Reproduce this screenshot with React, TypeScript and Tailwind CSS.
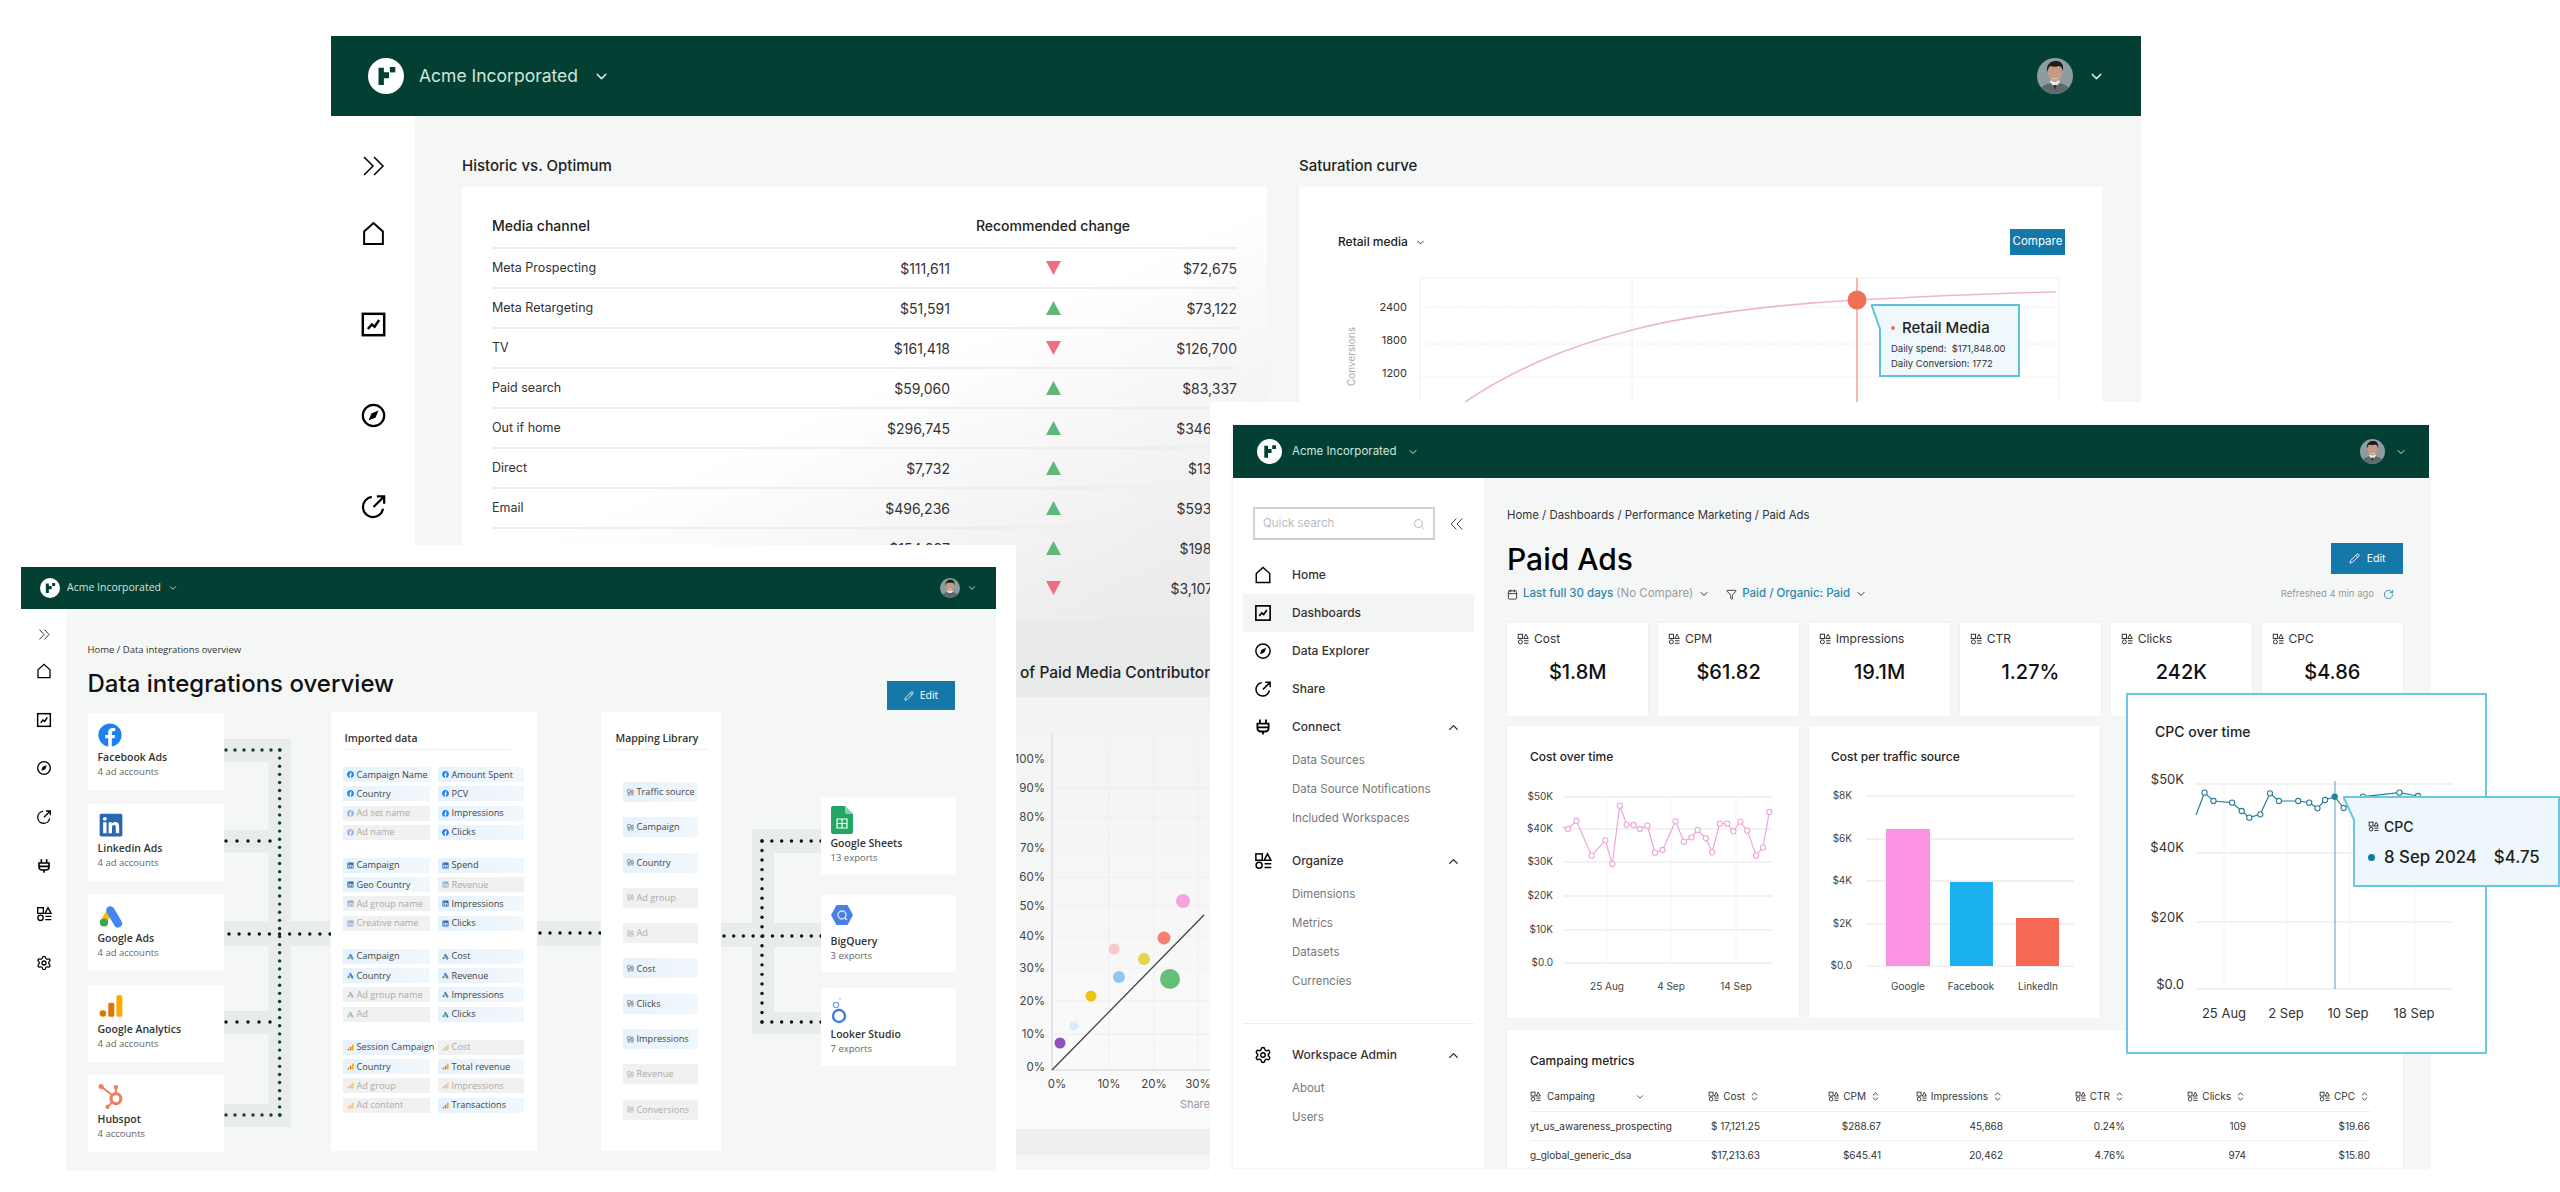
import { Calendar, ChevronDown, ChevronUp, ChevronsUpDown, Filter, Pencil, RotateCw, Search, Settings } from "lucide-react";
import { FaFacebook, FaLinkedin } from "react-icons/fa";
import { SiHubspot } from "react-icons/si";

type IconProps = { size?: number; className?: string };

const HomeIcon = ({ size = 18, className }: IconProps) => (
  <svg width={size} height={size} viewBox="0 0 24 24" fill="none" stroke="currentColor" strokeWidth="1.9" className={className}>
    <path d="M3 22V10L12 2l9 8v12z" />
  </svg>
);

const DashIcon = ({ size = 18, className }: IconProps) => (
  <svg width={size} height={size} viewBox="0 0 24 24" fill="none" stroke="currentColor" className={className}>
    <rect x="2.5" y="2.5" width="19" height="19" strokeWidth="2.2" />
    <path d="M7 16l3.5-4 2.5 2 4-6" strokeWidth="2.2" />
  </svg>
);

const CompassIcon = ({ size = 18, className }: IconProps) => (
  <svg width={size} height={size} viewBox="0 0 24 24" fill="none" stroke="currentColor" strokeWidth="2" className={className}>
    <circle cx="12" cy="12" r="9.5" />
    <path d="M15.5 8.5l-2 5-5 2 2-5z" fill="currentColor" strokeWidth="1" />
  </svg>
);

const ShareIcon = ({ size = 18, className }: IconProps) => (
  <svg width={size} height={size} viewBox="0 0 24 24" fill="none" stroke="currentColor" strokeWidth="2" className={className}>
    <path d="M20.5 14a9 9 0 1 1-10-10.5" />
    <path d="M12 12.5L21 3.5M15 3h6.5v6.5" />
  </svg>
);

const PlugIcon = ({ size = 18, className }: IconProps) => (
  <svg width={size} height={size} viewBox="0 0 24 24" fill="none" stroke="currentColor" strokeWidth="2.4" className={className}>
    <path d="M8 2v5M16 2v5M4.5 7.5h15v6a4.5 4.5 0 0 1-4.5 4.5H9a4.5 4.5 0 0 1-4.5-4.5zM12 18v4M4.5 12.5h15" />
  </svg>
);

const OrgIcon = ({ size = 12, className }: IconProps) => (
  <svg width={size} height={size} viewBox="0 0 24 24" fill="none" stroke="currentColor" strokeWidth="2" className={className}>
    <rect x="2.5" y="2.5" width="8.5" height="8.5" />
    <path d="M18 2.5l4.5 8.5h-9z" />
    <circle cx="6.8" cy="17.8" r="4" />
    <path d="M14 15.5h9M14 20.5h9" />
  </svg>
);

const DoubleChevron = ({ w, h, left, className }: { w: number; h: number; left?: boolean; className?: string }) => (
  <svg width={w} height={h} viewBox="0 0 24 20" fill="none" stroke="currentColor" strokeWidth="1.5" preserveAspectRatio="none" className={className}>
    <path d={left ? "M11 1L2 10l9 9M21 1l-9 9 9 9" : "M3 1l9 9-9 9M13 1l9 9-9 9"} />
  </svg>
);

const Logo = ({ size }: { size: number }) => (
  <svg width={size} height={size} viewBox="0 0 24 24">
    <circle cx="12" cy="12" r="12" fill="#fff" />
    <path d="M7 6.5h3.6v3h3.4v4h-3.4v4.5H7z" fill="#033f32" />
    <rect x="14.6" y="6" width="3.6" height="3.6" fill="#033f32" />
  </svg>
);

const Avatar = ({ size }: { size: number }) => (
  <svg width={size} height={size} viewBox="0 0 36 36">
    <clipPath id="avatar-clip">
      <circle cx="18" cy="18" r="18" />
    </clipPath>
    <g clipPath="url(#avatar-clip)">
      <rect width="36" height="36" fill="#8d9ca0" />
      <path d="M2 36c1-9 8-11 16-11s15 2 16 11z" fill="#5f6a6b" />
      <path d="M13 24l5 6 5-6-1-2h-8z" fill="#e9ecec" />
      <path d="M16 27l2 5 2-5z" fill="#29353a" />
      <ellipse cx="18" cy="15" rx="7" ry="9" fill="#c49a80" />
      <path d="M10 14c-1-9 5-11 9-11s8 2 7 10c-1-3-2-5-4-5-3 1-6 1-9 0-1 1-2 3-3 6z" fill="#1c1a1a" />
      <path d="M14 19c2 2 6 2 8 0-1 3-7 3-8 0z" fill="#f2e6dd" />
    </g>
  </svg>
);

const Header = ({ h, logo, text, gap, px, avatar, chevron }: { h: string; logo: number; text: string; gap: string; px: string; avatar: number; chevron: number }) => (
  <div className={`flex shrink-0 items-center justify-between bg-[#033f32] ${h} ${px}`}>
    <div className={`flex items-center ${gap}`}>
      <Logo size={logo} />
      <span className={`text-[#cfe5de] ${text}`}>Acme Incorporated</span>
      <ChevronDown size={chevron} className="text-[#d5e8e2]" />
    </div>
    <div className={`flex items-center ${gap}`}>
      <Avatar size={avatar} />
      <ChevronDown size={chevron} className="text-[#d5e8e2]" />
    </div>
  </div>
);

const Triangle = ({ up }: { up: boolean }) => (
  <svg width="15" height="14" viewBox="0 0 15 14">
    <polygon points={up ? "7.5,0 15,14 0,14" : "0,0 15,0 7.5,14"} fill={up ? "#5eb87a" : "#ee6f80"} />
  </svg>
);

const channels: [string, string, boolean, string][] = [
  ["Meta Prospecting", "$111,611", false, "$72,675"],
  ["Meta Retargeting", "$51,591", true, "$73,122"],
  ["TV", "$161,418", false, "$126,700"],
  ["Paid search", "$59,060", true, "$83,337"],
  ["Out if home", "$296,745", true, "$346,120"],
  ["Direct", "$7,732", true, "$13,120"],
  ["Email", "$496,236", true, "$593,120"],
  ["", "$154,027", true, "$198,120"],
  ["", "", false, "$3,107,120"],
];

const bubbles: [number, number, number, string][] = [
  [1060, 1043, 5.5, "#9050c0"],
  [1074, 1026, 4.5, "#dcebf7"],
  [1091, 996, 5.5, "#eec40f"],
  [1114, 949, 5.5, "#f9c8c8"],
  [1119, 977, 6, "#91c7ee"],
  [1144, 959, 6, "#e8d44a"],
  [1164, 938, 6.5, "#f47f72"],
  [1170, 979, 10, "#64c076"],
  [1183, 901, 7, "#f4a6dc"],
];

const BackWindow = () => (
  <div className="absolute left-[331px] top-[36px] flex h-[1134px] w-[1810px] flex-col overflow-hidden bg-white">
    <Header h="h-[80px]" logo={36} text="text-[17.5px]" gap="gap-[15px]" px="pl-[37px] pr-[36px]" avatar={36} chevron={17} />
    <div className="flex flex-1">
      <div className="flex w-[84px] flex-col items-center pt-[40px] text-black">
        <DoubleChevron w={24} h={20} className="mb-[44px]" />
        <div className="flex flex-col items-center gap-[64px]">
          <HomeIcon size={25} className="my-[1px]" />
          <DashIcon size={27} />
          <CompassIcon size={27} />
          <ShareIcon size={27} />
        </div>
      </div>
      <div className="flex flex-1 gap-[32px] bg-[#f5f7f7] pl-[47px]">
        <div className="flex w-[805px] flex-col">
          <h2 className="mt-[40px] h-[20px] text-[15px] font-medium leading-[20px] text-[#222]">Historic vs. Optimum</h2>
          <div className="mt-[11px] h-[434px] overflow-hidden bg-[linear-gradient(155deg,#fff_48%,#ebebeb_92%)] px-[30px] pt-[28px]">
            <div className="grid h-[34px] grid-cols-[458px_206px_81px] border-b-2 border-[#eee] text-[14px] font-medium text-[#222]">
              <span>Media channel</span>
              <span className="text-center">Recommended change</span>
            </div>
            {channels.map(([name, before, up, after], i) => (
              <div key={i} className="grid h-[40px] grid-cols-[458px_206px_81px] items-center border-b-2 border-[#eeeeee] text-[#333]">
                <div className="flex items-center justify-between">
                  <span className="text-[12.5px]">{name}</span>
                  <span className="text-[14px]">{before}</span>
                </div>
                <div className="flex justify-center">
                  <Triangle up={up} />
                </div>
                <span className="whitespace-nowrap text-right text-[14px]">{after}</span>
              </div>
            ))}
          </div>
          <div className="flex h-[76px] items-end overflow-hidden whitespace-nowrap bg-[#e9eaea] pb-[13px] pl-[558px] text-[15.5px] font-medium text-[#222]">of Paid Media Contributors</div>
          <svg width="805" height="432" viewBox="462 697 805 432" className="bg-[linear-gradient(180deg,#f2f3f3,#fbfbfb)]">
            <path d="M1052 733V1070H1210" fill="none" stroke="#e4e4e4" strokeWidth="2" />
            {[788, 817, 848, 877, 906, 936, 968, 1001, 1034].map((y) => (
              <line key={y} x1="1054" x2="1210" y1={y} y2={y} stroke="#eeeeee" />
            ))}
            {[1109, 1154, 1198].map((x) => (
              <line key={x} x1={x} x2={x} y1="733" y2="1070" stroke="#eeeeee" />
            ))}
            {["100%", "90%", "80%", "70%", "60%", "50%", "40%", "30%", "20%", "10%", "0%"].map((t, i) => (
              <text key={t} x="1045" y={[759, 788, 817, 848, 877, 906, 936, 968, 1001, 1034, 1067][i] + 4} textAnchor="end" fontSize="11.5" fill="#444">
                {t}
              </text>
            ))}
            {[["0%", 1057], ["10%", 1109], ["20%", 1154], ["30%", 1198]].map(([t, x]) => (
              <text key={t} x={x} y="1088" textAnchor="middle" fontSize="11.5" fill="#444">
                {t}
              </text>
            ))}
            <text x="1210" y="1108" textAnchor="end" fontSize="11" fill="#999">Share</text>
            <line x1="1052" y1="1070" x2="1204" y2="915" stroke="#444" strokeWidth="1.3" />
            {bubbles.map(([x, y, r, c]) => (
              <circle key={x} cx={x} cy={y} r={r} fill={c} />
            ))}
          </svg>
          <div className="h-[26px] bg-[#eef0f0]" />
        </div>
        <div className="flex w-[803px] flex-col">
          <h2 className="mt-[40px] h-[20px] text-[15px] font-medium leading-[20px] text-[#222]">Saturation curve</h2>
          <div className="relative mt-[11px] h-[434px] bg-white">
            <div className="flex items-center justify-between pl-[39px] pr-[37px] pt-[42px]">
              <div className="flex items-center gap-[7px] text-[12px] font-medium text-[#222]">
                Retail media
                <ChevronDown size={11} />
              </div>
              <button className="h-[26px] w-[55px] bg-[#1479a8] text-[11.5px] text-white">Compare</button>
            </div>
            <svg width="803" height="140" viewBox="1299 270 803 140" className="mt-[15px]">
              <path d="M1420 278H2059M1420 278V410M1632 278V410M2059 278V410" fill="none" stroke="#f0f0f0" />
              <path d="M1420 307H2059M1420 344H2059M1420 377H2059" fill="none" stroke="#eeeeee" strokeDasharray="2 1" />
              <text x="1407" y="311" textAnchor="end" fontSize="11" fill="#333">2400</text>
              <text x="1407" y="344" textAnchor="end" fontSize="11" fill="#333">1800</text>
              <text x="1407" y="377" textAnchor="end" fontSize="11" fill="#333">1200</text>
              <text x="1355" y="386" fontSize="10" fill="#aaa" transform="rotate(-90 1355 386)">Conversions</text>
              <path d="M1465 402C1520 365 1575 345 1632 330S1780 304 1856 300S2000 293 2056 292" fill="none" stroke="#eeb4d6" strokeWidth="1.6" />
              <line x1="1857" x2="1857" y1="278" y2="410" stroke="#f2705a" />
              <ellipse cx="1857" cy="300" rx="9.5" ry="9.5" fill="#f2705a" />
            </svg>
            <div className="absolute left-[580px] top-[117px] h-[73px] w-[141px] border-2 border-[#5cc1dc] bg-[#eef8fd] pl-[10px] pt-[12px] text-[#333]">
              <div className="flex items-center gap-[7px] text-[15px] font-medium leading-[20px] text-[#222]">
                <span className="size-[4px] rounded-full bg-[#f2705a]" />
                Retail Media
              </div>
              <p className="mt-[3px] text-[9.5px] leading-[15px]">Daily spend:&nbsp; $171,848.00</p>
              <p className="text-[9.5px] leading-[15px]">Daily Conversion: 1772</p>
              <svg width="10" height="28" viewBox="0 0 10 28" className="absolute left-[-10px] top-[-2px]">
                <path d="M10 2H1L10 26z" fill="#eef8fd" />
                <path d="M10 1H0.5L9 25" fill="none" stroke="#5cc1dc" strokeWidth="2" />
              </svg>
            </div>
          </div>
        </div>
      </div>
    </div>
  </div>
);

const Line = ({ pts, color, fill, hot }: { pts: [number, number][]; color: string; fill: string; hot?: number }) => (
  <>
    <polyline points={pts.map((p) => p.join(",")).join(" ")} fill="none" stroke={color} strokeWidth="1.2" />
    {pts.map(([x, y], i) => (
      <circle key={i} cx={x} cy={y} r="2.6" fill={i === hot ? color : fill} stroke={color} strokeWidth="1.1" />
    ))}
  </>
);

const toPage = (list: [number, number][]): [number, number][] => list.map(([x, y]) => [1480 + x / 1.452, 680 + y / 3]);

const costPts = toPage([
  [128, 447], [140, 423], [162, 527], [182, 481], [192, 552], [203, 377], [213, 434], [223, 435], [232, 447], [243, 437],
  [254, 518], [265, 510], [284, 424], [296, 485], [307, 472], [316, 450], [328, 475], [337, 517], [348, 431], [359, 431],
  [368, 454], [378, 425], [388, 452], [401, 527], [411, 502], [420, 396],
]);

const cpcPts = toPage([
  [1052, 338], [1065, 363], [1092, 368], [1106, 393], [1117, 413], [1133, 403], [1147, 340], [1160, 363], [1188, 363],
  [1204, 368], [1216, 385], [1227, 360], [1241, 350], [1254, 384], [1282, 350], [1335, 338], [1362, 348],
]);

const kpis = [
  ["Cost", "$1.8M"],
  ["CPM", "$61.82"],
  ["Impressions", "19.1M"],
  ["CTR", "1.27%"],
  ["Clicks", "242K"],
  ["CPC", "$4.86"],
];

const navSub = "flex h-[29px] items-center pl-[59px] text-[11.5px] text-[#777]";

const NavItem = ({ icon, label, active, open }: { icon: React.ReactNode; label: string; active?: boolean; open?: boolean }) => (
  <div className={`mx-[10px] flex h-[38px] items-center pl-[11px] pr-[13px] text-[12px] font-medium text-[#333] ${active ? "bg-[#f3f5f5]" : ""}`}>
    <span className="flex w-[38px] shrink-0 text-black">{icon}</span>
    <span className="flex-1">{label}</span>
    {open && <ChevronUp size={15} className="text-[#222]" />}
  </div>
);

const tableHead = ["Cost", "CPM", "Impressions", "CTR", "Clicks", "CPC"];
const tableRows = [
  ["yt_us_awareness_prospecting", "$ 17,121.25", "$288.67", "45,868", "0.24%", "109", "$19.66"],
  ["g_global_generic_dsa", "$17,213.63", "$645.41", "20,462", "4.76%", "974", "$15.80"],
];
const tableCols = "grid grid-cols-[170px_60px_121px_122px_122px_121px_124px]";

const PaidAdsWindow = () => (
  <div className="absolute left-[1210px] top-[402px] h-[790px] w-[1350px] bg-white pl-[23px] pt-[23px]">
    <div className="flex h-[743px] w-[1196px] flex-col overflow-hidden bg-white shadow-[0_0_3px_#e4e4e4]">
      <Header h="h-[53px]" logo={25} text="text-[11.5px]" gap="gap-[10px]" px="pl-[24px] pr-[22px]" avatar={25} chevron={12} />
      <div className="flex flex-1">
        <div className="w-[251px] shrink-0 pt-[29px]">
          <div className="flex items-center pl-[20px]">
            <div className="flex h-[33px] w-[182px] items-center justify-between border-2 border-[#d2d2d2] pl-[8px] pr-[8px] text-[11.5px] text-[#bbb]">
              Quick search
              <Search size={12} />
            </div>
            <DoubleChevron w={14} h={12} left className="ml-[15px] text-[#222]" />
          </div>
          <div className="mt-[16px]">
            <NavItem icon={<HomeIcon />} label="Home" />
            <NavItem icon={<DashIcon />} label="Dashboards" active />
            <NavItem icon={<CompassIcon />} label="Data Explorer" />
            <NavItem icon={<ShareIcon />} label="Share" />
            <NavItem icon={<PlugIcon />} label="Connect" open />
            <div className={navSub}>Data Sources</div>
            <div className={navSub}>Data Source Notifications</div>
            <div className={navSub}>Included Workspaces</div>
            <div className="mt-[9px]">
              <NavItem icon={<OrgIcon size={18} />} label="Organize" open />
            </div>
            <div className={navSub}>Dimensions</div>
            <div className={navSub}>Metrics</div>
            <div className={navSub}>Datasets</div>
            <div className={navSub}>Currencies</div>
            <div className="mx-[10px] mt-[27px] border-t border-[#eee]" />
            <div className="mt-[12px]">
              <NavItem icon={<Settings size={18} strokeWidth={1.9} />} label="Workspace Admin" open />
            </div>
            <div className={navSub}>About</div>
            <div className={navSub}>Users</div>
          </div>
        </div>
        <div className="flex-1 bg-[#f5f7f7] pl-[23px] pr-[26px] pt-[30px]">
          <p className="text-[11.4px] leading-[14px] text-[#333]">Home / Dashboards / Performance Marketing / Paid Ads</p>
          <div className="mt-[21px] flex h-[31px] items-center justify-between">
            <h1 className="text-[30px] font-medium leading-none text-black">Paid Ads</h1>
            <button className="flex h-[31px] w-[72px] items-center justify-center gap-[7px] bg-[#1479a8] text-[10.5px] text-white">
              <Pencil size={11} />
              Edit
            </button>
          </div>
          <div className="mt-[12px] flex h-[16px] items-center text-[11.5px] font-medium">
            <Calendar size={11} className="text-[#333]" />
            <span className="ml-[5px] text-[#2b87ad]">Last full 30 days</span>
            <span className="ml-[3px] font-normal text-[#9a9a9a]">(No Compare)</span>
            <ChevronDown size={12} className="ml-[5px] text-[#333]" />
            <Filter size={11} className="ml-[16px] text-[#333]" />
            <span className="ml-[5px] text-[#2b87ad]">Paid / Organic: Paid</span>
            <ChevronDown size={12} className="ml-[5px] text-[#333]" />
            <span className="ml-auto text-[9.5px] font-normal text-[#9a9a9a]">Refreshed 4 min ago</span>
            <RotateCw size={11} className="ml-[9px] mr-[9px] text-[#2b87ad]" />
          </div>
          <div className="mt-[21px] grid h-[93px] grid-cols-6 gap-[9.5px]">
            {kpis.map(([label, value]) => (
              <div key={label} className="bg-white pl-[10px] pt-[9px] shadow-[0_0_2px_#e8e8e8]">
                <div className="flex h-[14px] items-center gap-[5px] text-[12px] text-[#333]">
                  <OrgIcon size={12} />
                  {label}
                </div>
                <p className="mt-[13px] pr-[10px] text-center text-[20px] font-medium leading-[26px] text-[#111]">{value}</p>
              </div>
            ))}
          </div>
          <div className="mt-[10px] flex h-[292px] gap-[10px]">
            <div className="w-[292px] bg-white shadow-[0_0_2px_#e8e8e8]">
              <p className="h-[44px] pl-[23px] pt-[24px] text-[12px] font-medium leading-[14px] text-[#222]">Cost over time</p>
              <svg width="292" height="248" viewBox="1507 770 292 248">
                {[796, 828, 861, 895, 929, 962].map((y, i) => (
                  <g key={y}>
                    <line x1="1563" x2="1772" y1={y + 1} y2={y + 1} stroke="#eeeeee" strokeWidth="1.5" />
                    <text x="1553" y={y + 4} textAnchor="end" fontSize="10" fill="#444">
                      {["$50K", "$40K", "$30K", "$20K", "$10K", "$0.0"][i]}
                    </text>
                  </g>
                ))}
                <path d="M1607 796V963M1671 796V963M1736 796V963" stroke="#f4f4f4" />
                <polyline points={`1563,827 ${costPts[0].join(",")}`} fill="none" stroke="#eba6dc" strokeWidth="1.2" />
                <Line pts={costPts} color="#eba6dc" fill="#fff" />
                {[["25 Aug", 1607], ["4 Sep", 1671], ["14 Sep", 1736]].map(([t, x]) => (
                  <text key={t} x={x} y="990" textAnchor="middle" fontSize="10" fill="#444">
                    {t}
                  </text>
                ))}
              </svg>
            </div>
            <div className="w-[291px] bg-white shadow-[0_0_2px_#e8e8e8]">
              <p className="h-[44px] pl-[22px] pt-[24px] text-[12px] font-medium leading-[14px] text-[#222]">Cost per traffic source</p>
              <svg width="291" height="248" viewBox="1809 770 291 248">
                {[795, 838, 880, 923, 965].map((y, i) => (
                  <g key={y}>
                    <line x1="1866" x2="2074" y1={y + 1} y2={y + 1} stroke="#eeeeee" strokeWidth="1.5" />
                    <text x="1852" y={y + 4} textAnchor="end" fontSize="10" fill="#444">
                      {["$8K", "$6K", "$4K", "$2K", "$0.0"][i]}
                    </text>
                  </g>
                ))}
                <rect x="1886" y="829" width="44" height="137" fill="#fd92e2" />
                <rect x="1950" y="882" width="43" height="84" fill="#1bb0f0" />
                <rect x="2016" y="918" width="43" height="48" fill="#f66a55" />
                {[["Google", 1908], ["Facebook", 1971], ["LinkedIn", 2038]].map(([t, x]) => (
                  <text key={t} x={x} y="990" textAnchor="middle" fontSize="10" fill="#444">
                    {t}
                  </text>
                ))}
              </svg>
            </div>
          </div>
          <div className="mt-[12px] h-[200px] bg-white pl-[23px] pt-[24px] shadow-[0_0_2px_#e8e8e8]">
            <p className="text-[12px] font-medium leading-[14px] text-[#222]">Campaing metrics</p>
            <div className={`${tableCols} mt-[14px] h-[30px] w-[840px] items-center border-b border-[#eee] text-[10px] text-[#333]`}>
              <div className="flex items-center gap-[6px]">
                <OrgIcon size={11} />
                Campaing
                <ChevronDown size={10} className="ml-[34px]" />
              </div>
              {tableHead.map((h) => (
                <div key={h} className="flex items-center justify-end gap-[4px]">
                  <OrgIcon size={11} />
                  {h}
                  <ChevronsUpDown size={11} />
                </div>
              ))}
            </div>
            {tableRows.map((row) => (
              <div key={row[0]} className={`${tableCols} h-[29px] w-[840px] items-center border-b border-[#eee] text-[10px] text-[#333]`}>
                {row.map((cell, i) => (
                  <span key={i} className={i === 0 ? "whitespace-nowrap" : "text-right"}>
                    {cell}
                  </span>
                ))}
              </div>
            ))}
          </div>
        </div>
      </div>
    </div>
  </div>
);

const CpcCard = () => (
  <>
    <div className="absolute left-[2126px] top-[693px] h-[361px] w-[361px] border-2 border-[#6cc6e6] bg-white">
      <p className="h-[60px] pl-[27px] pt-[28px] text-[14px] font-medium leading-[18px] text-[#222]">CPC over time</p>
      <svg width="357" height="297" viewBox="2128 755 357 297">
        {[784, 853, 922, 989].map((y, i) => (
          <g key={y}>
            <line x1="2196" x2="2452" y1={y} y2={y} stroke="#eeeeee" strokeWidth="1.5" />
            <text x="2184" y={[779, 847, 917, 984][i] + 5} textAnchor="end" fontSize="13" fill="#333">
              {["$50K", "$40K", "$20K", "$0.0"][i]}
            </text>
          </g>
        ))}
        <path d="M2224 784V989M2287 784V989M2350 784V989M2415 784V989" stroke="#f4f4f4" />
        <line x1="2335" x2="2335" y1="781" y2="989" stroke="#5b9fb9" strokeWidth="1" />
        <polyline points={`2196,815 ${cpcPts[0].join(",")}`} fill="none" stroke="#2a7f99" strokeWidth="1.2" />
        <Line pts={cpcPts} color="#2a7f99" fill="#fff" hot={12} />
        {[["25 Aug", 2224], ["2 Sep", 2286], ["10 Sep", 2348], ["18 Sep", 2414]].map(([t, x]) => (
          <text key={t} x={x} y="1018" textAnchor="middle" fontSize="13" fill="#333">
            {t}
          </text>
        ))}
      </svg>
    </div>
    <div className="absolute left-[2353px] top-[796px] h-[91px] w-[207px] border-2 border-[#6cc6e6] bg-[#edf7fc] pl-[13px] pt-[18px] text-[#222]">
      <div className="flex h-[20px] items-center gap-[5px] text-[14px] font-medium">
        <OrgIcon size={11} />
        CPC
      </div>
      <div className="mt-[9px] flex items-center text-[16.8px] font-medium">
        <span className="mr-[9px] size-[7px] rounded-full bg-[#1479a8]" />
        8 Sep 2024
        <span className="ml-[17px]">$4.75</span>
      </div>
      <svg width="12" height="26" viewBox="0 0 12 26" className="absolute left-[-12px] top-[-2px]">
        <path d="M12 2H1L12 24z" fill="#edf7fc" />
        <path d="M12 1H0.5L11 24" fill="none" stroke="#6cc6e6" strokeWidth="2" />
      </svg>
    </div>
  </>
);

const GoogleAdsIcon = ({ size }: { size: number }) => (
  <svg width={size} height={size} viewBox="0 0 24 24">
    <path d="M2 17L9 5l5 3-7 12z" fill="#fbbc04" />
    <path d="M9.5 3.5a3.8 3.8 0 0 1 5.2 1.4l7 12a3.8 3.8 0 0 1-6.6 3.8l-7-12a3.8 3.8 0 0 1 1.4-5.2z" fill="#4285f4" />
    <circle cx="5.5" cy="18" r="3.8" fill="#34a853" />
  </svg>
);

const AnalyticsIcon = ({ size }: { size: number }) => (
  <svg width={size} height={size} viewBox="0 0 24 24">
    <rect x="17" y="2" width="5.5" height="20" rx="1.5" fill="#f9ab00" />
    <rect x="9.5" y="9" width="5.5" height="13" rx="1.5" fill="#e37400" />
    <circle cx="4.5" cy="19" r="3" fill="#e37400" />
  </svg>
);

const SheetsIcon = () => (
  <svg width="22" height="28" viewBox="0 0 22 28">
    <path d="M2 0h12l8 8v18a2 2 0 0 1-2 2H2a2 2 0 0 1-2-2V2a2 2 0 0 1 2-2z" fill="#23a566" />
    <path d="M14 0l8 8h-6a2 2 0 0 1-2-2z" fill="#8ed1b1" />
    <path d="M6 13h10v9H6zM6 17.5h10M11 13v9" fill="none" stroke="#fff" strokeWidth="1.2" />
  </svg>
);

const BigQueryIcon = () => (
  <svg width="22" height="22" viewBox="0 0 22 22">
    <polygon points="5.5,1 16.5,1 22,11 16.5,21 5.5,21 0,11" fill="#4a7fe5" />
    <circle cx="11" cy="11" r="4" fill="none" stroke="#d5e3fb" strokeWidth="1.5" />
    <path d="M13.5 13.5L16 16" stroke="#d5e3fb" strokeWidth="1.5" />
  </svg>
);

const LookerIcon = () => (
  <svg width="16" height="28" viewBox="0 0 16 28">
    <circle cx="8" cy="19" r="6" fill="none" stroke="#3f7de0" strokeWidth="2.4" />
    <circle cx="5" cy="8" r="2.6" fill="none" stroke="#7ea6ea" strokeWidth="1.4" />
    <circle cx="9" cy="2.5" r="1" fill="#b9cff3" />
  </svg>
);

const sources: [React.ReactNode, string, string][] = [
  [<FaFacebook size={24} className="text-[#1b82ee]" />, "Facebook Ads", "4 ad accounts"],
  [<FaLinkedin size={26} className="text-[#2867b2]" />, "Linkedin Ads", "4 ad accounts"],
  [<GoogleAdsIcon size={26} />, "Google Ads", "4 ad accounts"],
  [<AnalyticsIcon size={26} />, "Google Analytics", "4 ad accounts"],
  [<SiHubspot size={25} className="text-[#ee7f60]" />, "Hubspot", "4 accounts"],
];

type TagKind = "fb" | "li" | "ga" | "an" | "map";

const TagIcon = ({ kind }: { kind: TagKind }) => {
  if (kind === "fb") return <FaFacebook size={7} className="shrink-0 text-[#1b82ee]" />;
  if (kind === "li") return <FaLinkedin size={7} className="shrink-0 text-[#2867b2]" />;
  if (kind === "ga") return <GoogleAdsIcon size={7} />;
  if (kind === "an") return <AnalyticsIcon size={7} />;
  return <OrgIcon size={7} className="shrink-0 text-[#555]" />;
};

const Tag = ({ kind, label, off, tall }: { kind: TagKind; label: string; off: boolean; tall?: boolean }) => (
  <div className={`flex items-center gap-[3px] whitespace-nowrap pl-[4px] text-[9.2px] ${tall ? "h-[20px]" : "h-[15px]"} ${off ? "bg-[#f1f1f1] text-[#aaa]" : "bg-[linear-gradient(90deg,#e6f2fc,#f1f8fd)] text-[#444]"}`}>
    <span className={`flex ${off ? "opacity-50" : ""}`}>
      <TagIcon kind={kind} />
    </span>
    {label}
  </div>
);

const tagGroups: { kind: TagKind; rows: [string, boolean, string, boolean][] }[] = [
  { kind: "fb", rows: [["Campaign Name", false, "Amount Spent", false], ["Country", false, "PCV", false], ["Ad set name", true, "Impressions", false], ["Ad name", true, "Clicks", false]] },
  { kind: "li", rows: [["Campaign", false, "Spend", false], ["Geo Country", false, "Revenue", true], ["Ad group name", true, "Impressions", false], ["Creative name", true, "Clicks", false]] },
  { kind: "ga", rows: [["Campaign", false, "Cost", false], ["Country", false, "Revenue", false], ["Ad group name", true, "Impressions", false], ["Ad", true, "Clicks", false]] },
  { kind: "an", rows: [["Session Campaign", false, "Cost", true], ["Country", false, "Total revenue", false], ["Ad group", true, "Impressions", true], ["Ad content", true, "Transactions", false]] },
];

const mappings: [string, boolean][] = [
  ["Traffic source", false],
  ["Campaign", false],
  ["Country", false],
  ["Ad group", true],
  ["Ad", true],
  ["Cost", false],
  ["Clicks", false],
  ["Impressions", false],
  ["Revenue", true],
  ["Conversions", true],
];

const bands: [number, number, number, number][] = [
  [224, 739, 67, 23],
  [268.5, 739, 22.5, 388],
  [224, 830, 45, 22.5],
  [224, 921, 106, 25],
  [224, 1011, 45, 23],
  [224, 1104, 67, 23],
  [537, 921, 64, 25],
  [721, 923, 100, 24],
  [752, 829, 69, 24],
  [752, 829, 22, 205],
  [752, 1012, 69, 22],
];

// x1, y1, x2, y2, step, colour
const dotLines: [number, number, number, number, number, string][] = [
  [226, 750, 280, 750, 8.9, "#123f33"],
  [226, 841, 270, 841, 10.7, "#111"],
  [229, 934, 330, 934, 10, "#111"],
  [226, 1022, 270, 1022, 10.7, "#111"],
  [226, 1115, 280, 1115, 8.9, "#123f33"],
  [279.6, 750, 279.6, 1115, 8.2, "#123f33"],
  [540, 933, 600, 933, 10, "#111"],
  [724, 936, 821, 936, 10, "#111"],
  [762, 841, 821, 841, 10, "#111"],
  [762, 1022, 821, 1022, 10, "#111"],
  [762, 841, 762, 1022, 9.5, "#111"],
];

const Connectors = () => (
  <svg width="930" height="459" viewBox="66 712 930 459" className="absolute left-[-21.5px] top-0">
    {bands.map(([x, y, w, h], i) => (
      <rect key={i} x={x} y={y} width={w} height={h} fill="#e9ecec" />
    ))}
    {dotLines.flatMap(([x1, y1, x2, y2, step, c], i) => {
      const n = Math.round(Math.hypot(x2 - x1, y2 - y1) / step);
      return Array.from({ length: n + 1 }, (_, k) => (
        <circle key={`${i}-${k}`} cx={x1 + ((x2 - x1) * k) / n} cy={y1 + ((y2 - y1) * k) / n} r="1.7" fill={c} />
      ));
    })}
  </svg>
);

const cardTitle = "text-[10.5px] font-semibold leading-[14px] text-[#333]";
const cardSub = "text-[9.5px] leading-[14px] text-[#666]";

const DataWindow = () => (
  <div className="absolute left-0 top-[545px] h-[647px] w-[1016px] bg-white pl-[21px] pt-[22px] [font-family:'Open_Sans',sans-serif]">
    <div className="flex h-[604px] w-[975px] flex-col overflow-hidden bg-white">
      <Header h="h-[42px]" logo={20} text="text-[10.5px]" gap="gap-[7px]" px="pl-[19px] pr-[19px]" avatar={20} chevron={10} />
      <div className="flex flex-1">
        <div className="flex w-[45px] shrink-0 flex-col items-center pt-[20px] text-black">
          <DoubleChevron w={12} h={11} className="mb-[23px]" />
          <div className="flex flex-col items-center gap-[32.7px]">
            <HomeIcon size={16} />
            <DashIcon size={16} />
            <CompassIcon size={16} />
            <ShareIcon size={16} />
            <PlugIcon size={16} />
            <OrgIcon size={16} />
            <Settings size={16} strokeWidth={1.9} />
          </div>
        </div>
        <div className="relative flex-1 bg-[#f5f7f7] pl-[21.5px] pt-[34px]">
          <p className="text-[9.5px] leading-[14px] text-[#333]">Home / Data integrations overview</p>
          <div className="flex h-[55px] items-start justify-between pr-[41px]">
            <h1 className="mt-[11px] whitespace-nowrap text-[24px] font-medium leading-[32px] text-[#111] [font-family:Inter,sans-serif]">Data integrations overview</h1>
            <button className="mt-[24px] flex h-[29px] w-[68px] items-center justify-center gap-[6px] bg-[#1479a8] text-[10.5px] text-white">
              <Pencil size={10} />
              Edit
            </button>
          </div>
          <div className="relative flex h-[440px]">
            <Connectors />
            <div className="relative flex w-[136px] shrink-0 flex-col gap-[13.5px] pt-[1px]">
              {sources.map(([icon, name, sub]) => (
                <div key={name} className="h-[77px] bg-white pl-[10px] pt-[8px]">
                  <div className="flex h-[27px] items-center">{icon}</div>
                  <p className={`${cardTitle} mt-[2px]`}>{name}</p>
                  <p className={`${cardSub} mt-[1px]`}>{sub}</p>
                </div>
              ))}
            </div>
            <div className="relative ml-[107px] h-[439px] w-[206px] shrink-0 bg-white px-[12px] pt-[19px]">
              <p className={`${cardTitle} ml-[2px] mr-[14px] border-b border-[#eeeeee] pb-[4px]`}>Imported data</p>
              <div className="mt-[17px] flex flex-col gap-[18px]">
                {tagGroups.map((group) => (
                  <div key={group.kind} className="grid grid-cols-[87px_86px] gap-x-[8px] gap-y-[4.3px]">
                    {group.rows.map(([a, aOff, b, bOff]) => (
                      <div key={a + b} className="contents">
                        <Tag kind={group.kind} label={a} off={aOff} />
                        <Tag kind={group.kind} label={b} off={bOff} />
                      </div>
                    ))}
                  </div>
                ))}
              </div>
            </div>
            <div className="relative ml-[64px] h-[439px] w-[120px] shrink-0 bg-white pl-[15px] pr-[13px] pt-[19px]">
              <p className={`${cardTitle} border-b border-[#eeeeee] pb-[4px]`}>Mapping Library</p>
              <div className="ml-[7px] mt-[32px] flex w-[75px] flex-col gap-[15.3px]">
                {mappings.map(([label, off]) => (
                  <Tag key={label} kind="map" label={label} off={off} tall />
                ))}
              </div>
            </div>
            <div className="relative ml-[100px] w-[135px] shrink-0 pt-[85px]">
              <div className="h-[78px] bg-white pl-[10px] pt-[9px]">
                <SheetsIcon />
                <p className={`${cardTitle} mt-[2px]`}>Google Sheets</p>
                <p className={`${cardSub} mt-[1px]`}>13 exports</p>
              </div>
              <div className="mt-[20px] h-[77px] bg-white pl-[10px] pt-[9px]">
                <div className="flex h-[28px] items-start">
                  <BigQueryIcon />
                </div>
                <p className={`${cardTitle} mt-[2px]`}>BigQuery</p>
                <p className={`${cardSub} mt-[1px]`}>3 exports</p>
              </div>
              <div className="mt-[16px] h-[78px] bg-white pl-[10px] pt-[9px]">
                <LookerIcon />
                <p className={`${cardTitle} mt-[2px]`}>Looker Studio</p>
                <p className={`${cardSub} mt-[1px]`}>7 exports</p>
              </div>
            </div>
          </div>
        </div>
      </div>
    </div>
  </div>
);

export default function App() {
  return (
    <div className="relative h-[1192px] w-[2560px] overflow-hidden bg-white [font-family:Inter,sans-serif]">
      <BackWindow />
      <DataWindow />
      <PaidAdsWindow />
      <CpcCard />
    </div>
  );
}
